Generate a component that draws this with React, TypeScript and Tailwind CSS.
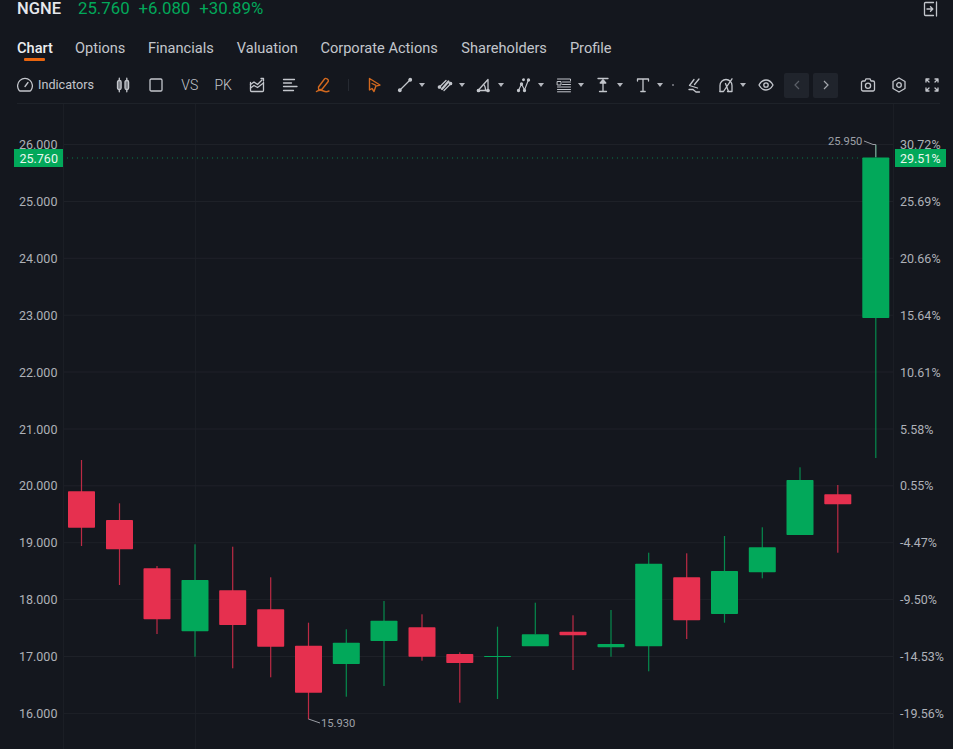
import React from "react";

const G = "#02a85a";
const R = "#e6304f";

type C = [number, number, number, number, number, "g" | "r"];
const candles: C[] = [
  [81.5, 460, 546, 491.3, 527.7, "r"],
  [119.5, 503.3, 585, 520, 549.3, "r"],
  [157, 566, 634, 568.3, 619.3, "r"],
  [195, 544.3, 656.7, 580, 631.3, "g"],
  [232.7, 546.7, 668.3, 590.3, 625, "r"],
  [270.7, 577.3, 677.3, 609.3, 646.7, "r"],
  [308.5, 622.7, 719.3, 645.7, 692.7, "r"],
  [346.3, 629.3, 696.7, 642.7, 664, "g"],
  [384, 601, 686, 620.7, 641, "g"],
  [422, 614.3, 660.7, 627.3, 656.7, "r"],
  [459.8, 652.3, 702.7, 654, 663, "r"],
  [497.5, 626.7, 699, 656, 657, "g"],
  [535.3, 602.7, 634.3, 634.3, 646.3, "g"],
  [573, 615.3, 670, 631.7, 635.3, "r"],
  [611, 610, 656.7, 644, 647.3, "g"],
  [648.7, 552.7, 671.3, 563.7, 646.3, "g"],
  [686.7, 553.3, 639, 577.3, 620.3, "r"],
  [724.5, 536, 622.7, 571, 614, "g"],
  [762.3, 527.3, 578.3, 547.3, 572.3, "g"],
  [800, 467.3, 535, 480, 535, "g"],
  [837.8, 485, 552.7, 494.3, 504.3, "r"],
  [875.8, 145, 458, 157.5, 318, "g"],
];

const rows: [number, string, string][] = [
  [144.5, "26.000", "30.72%"],
  [201.5, "25.000", "25.69%"],
  [258.3, "24.000", "20.66%"],
  [315.2, "23.000", "15.64%"],
  [372, "22.000", "10.61%"],
  [429, "21.000", "5.58%"],
  [485.8, "20.000", "0.55%"],
  [542.7, "19.000", "-4.47%"],
  [599.6, "18.000", "-9.50%"],
  [656.5, "17.000", "-14.53%"],
  [713.4, "16.000", "-19.56%"],
];

function Ico({ children, c = "#c3c6cc", w = 16 }: { children: React.ReactNode; c?: string; w?: number }) {
  return (
    <svg width={w} height={16} viewBox={`0 0 ${w} 16`} fill="none" stroke={c} strokeWidth={1.3} strokeLinecap="round" strokeLinejoin="round" className="shrink-0">
      {children}
    </svg>
  );
}

function Caret() {
  return (
    <svg width={6} height={4} viewBox="0 0 6 4" className="shrink-0">
      <path d="M0 0H6L3 4Z" fill="#b4b7bd" />
    </svg>
  );
}

function Tool({ children, className }: { children: React.ReactNode; className: string }) {
  return (
    <div className={`flex items-center shrink-0 ${className}`}>
      {children}
      <div className="ml-[6px]">
        <Caret />
      </div>
    </div>
  );
}

function Cell({ children }: { children: React.ReactNode }) {
  return <div className="w-[33.4px] shrink-0 flex items-center justify-center">{children}</div>;
}

export default function App() {
  return (
    <div className="w-[953px] h-[749px] overflow-hidden bg-[#14171e] flex flex-col font-[Roboto,sans-serif] text-[#c3c6cc]">
      <div className="h-[17px] flex items-center pl-[17px] pr-[14px] shrink-0 text-[16.8px] leading-[17px]">
        <span className="text-[16.5px] font-medium text-[#e6e8ec]">NGNE</span>
        <span className="ml-[17px] text-[#02a85a]">25.760</span>
        <span className="ml-[9px] text-[#02a85a]">+6.080</span>
        <span className="ml-[9px] text-[#02a85a]">+30.89%</span>
        <div className="ml-auto">
          <Ico w={16}>
            <path d="M10.500 1.500H2.500a1 1 0 0 0-1 1v11a1 1 0 0 0 1 1h8M13.500 1v14" />
            <path d="M4 8h5.500M7.500 5.800 9.800 8 7.500 10.200" strokeWidth={1.4} />
          </Ico>
        </div>
      </div>

      <div className="h-[44px] pt-[22px] flex items-start pl-[17px] text-[14.6px] leading-[18px] shrink-0">
        <div className="relative font-medium text-[#eceef1]">
          Chart
          <div className="absolute left-[7px] top-[19px] w-[21px] h-[3px] rounded-[1px] bg-[#e8650f]" />
        </div>
        <span className="ml-[22px]">Options</span>
        <span className="ml-[22.500px]">Financials</span>
        <span className="ml-[23px]">Valuation</span>
        <span className="ml-[22.500px]">Corporate Actions</span>
        <span className="ml-[23.500px]">Shareholders</span>
        <span className="ml-[23px]">Profile</span>
      </div>

      <div className="h-[43px] ml-[17px] mr-[13px] flex items-center border-b border-[#1e2229] shrink-0">
        <div className="flex items-center h-[42px] w-full pt-[6px]">
          <Ico>
            <path d="M3.300 14h9.400a1.600 1.600 0 0 0 1.200-.7A7.400 7.400 0 1 0 2.100 13.300 1.600 1.600 0 0 0 3.300 14Z" />
            <path d="M8 9.500 11 5.500" />
          </Ico>
          <span className="ml-[5px] w-[55px] text-[12.6px] leading-none shrink-0">Indicators</span>
          <div className="flex items-center ml-[13.300px]">
            <Cell>
              <Ico>
                <rect x="2.500" y="3.500" width="3.600" height="9" rx="1.500" fill="#7d8087" />
                <rect x="10" y="3.500" width="3.600" height="9" rx="1.500" fill="#7d8087" />
                <path d="M4.300 1.200v2.300M4.300 12.500v2.300M11.800 1.200v2.300M11.800 12.500v2.300" />
              </Ico>
            </Cell>
            <Cell>
              <Ico>
                <rect x="2" y="2" width="12" height="12" rx="1.200" />
              </Ico>
            </Cell>
            <Cell>
              <span className="text-[14px] leading-none font-light">VS</span>
            </Cell>
            <Cell>
              <span className="text-[14px] leading-none font-light">PK</span>
            </Cell>
            <Cell>
              <Ico>
                <path d="M1.500 5.500v8a1 1 0 0 0 1 1h11a1 1 0 0 0 1-1v-8" />
                <path d="M1.500 7.500 5 5l3.500 2.500L13 3" />
                <path d="M1.500 11 5 8.500l3.500 2L14.500 6" />
                <path d="M12 1.500h2.500V4" />
              </Ico>
            </Cell>
            <Cell>
              <Ico>
                <path d="M1.500 2.500h11M1.500 6h8M1.500 9.500h13.500M1.500 13.500h10" strokeWidth={1.3} />
              </Ico>
            </Cell>
            <Cell>
              <Ico c="#d2691f">
                <path d="m3.500 10 6-8a1.600 1.600 0 0 1 2.300-.3l.9.7a1.600 1.600 0 0 1 .3 2.300l-6 7.600-3.300.6Z" strokeWidth={1.4} />
                <path d="M1.500 14.500c3-2 5-1.500 7-.5s3.500 1 5.500 0" strokeWidth={1.4} />
              </Ico>
            </Cell>
          </div>
          <div className="ml-[8px] w-px h-[12px] bg-[#262a32] shrink-0" />
          <div className="ml-[15px] w-[20px] flex justify-center shrink-0">
            <Ico c="#d2691f">
              <path d="M3.500 1.500 14 8l-4.200 1.200L8 14.500l-2-3L3.500 13Z" strokeWidth={1.4} />
              <path d="M6 6.500 9.500 8.200" />
            </Ico>
          </div>
          <Tool className="ml-[13px] w-[39.7px]">
            <Ico>
              <path d="M3.500 12.500 12.500 3.500" />
              <circle cx="2.800" cy="13.200" r="1.300" fill="#c3c6cc" />
              <circle cx="13.200" cy="2.800" r="1.300" fill="#c3c6cc" />
            </Ico>
          </Tool>
          <Tool className="w-[39.7px]">
            <Ico>
              <path d="M2 10.500 9 3.500M7 13.500 14 6.500" />
              <path d="M5 12 11.500 4.500" strokeWidth={2.2} />
              <circle cx="2.500" cy="10" r="1.200" fill="#c3c6cc" />
              <circle cx="13.500" cy="6.500" r="1.200" fill="#c3c6cc" />
            </Ico>
          </Tool>
          <Tool className="w-[39.7px]">
            <Ico>
              <path d="M2 13.500 12 2.500v11H2Z" />
              <path d="M7.500 7.500c1.500 1 2 3.500 2 6" />
              <circle cx="2.500" cy="13.500" r="1.200" fill="#c3c6cc" />
              <circle cx="12" cy="13.500" r="1.200" fill="#c3c6cc" />
            </Ico>
          </Tool>
          <Tool className="w-[39.7px]">
            <Ico>
              <path d="M2.500 13.500 5.500 7l3 6L12 4" strokeWidth={1.1} />
              <circle cx="2.500" cy="13.500" r="1" fill="#c3c6cc" />
              <circle cx="5.500" cy="7" r="1" fill="#c3c6cc" />
              <circle cx="8.500" cy="13.500" r="1" fill="#c3c6cc" />
              <circle cx="12.500" cy="3" r="1" fill="#c3c6cc" />
              <circle cx="7.500" cy="2.800" r="0.800" fill="#c3c6cc" />
            </Ico>
          </Tool>
          <Tool className="w-[39.7px]">
            <Ico>
              <path d="M1.500 2h13v1.500M6.500 5h8M6.500 7.500h8M1.500 10h13M1.500 12.500h13M1.500 14.800h13" strokeWidth={1} />
              <rect x="1.500" y="4.500" width="3.500" height="3.500" strokeWidth={1} />
            </Ico>
          </Tool>
          <Tool className="w-[39.7px]">
            <Ico>
              <path d="M4.500 14.500h7M8 6v8.500M3 1.500h10" />
              <path d="M5.200 6 8 2.800 10.800 6Z" fill="#c3c6cc" />
            </Ico>
          </Tool>
          <Tool className="w-[37px]">
            <Ico>
              <path d="M2.500 4V2h11v2M8 2v12.500M5.800 14.500h4.400" />
            </Ico>
          </Tool>
          <div className="w-[2px] h-[2px] rounded-full bg-[#7f828a] shrink-0" />
          <div className="ml-[12px] shrink-0">
            <Ico>
              <path d="M13 2 8.500 7.500M8 2.500 3.500 8.500l8 2.500" />
              <path d="M3 12.500h4l3 2.500h3.500" />
            </Ico>
          </div>
          <Tool className="ml-[15.500px] w-[40.500px]">
            <Ico>
              <path d="M2 14.500V8.500a6 6 0 0 1 12 0v6H9.500" />
              <path d="M14 1.800 5.500 14.500H2M7.500 6.500l3 8" />
            </Ico>
          </Tool>
          <div className="shrink-0">
            <Ico>
              <path d="M1 8c1.800-3.300 4.200-5 7-5s5.200 1.700 7 5c-1.800 3.300-4.200 5-7 5S2.800 11.300 1 8Z" />
              <circle cx="8" cy="8" r="2.200" />
            </Ico>
          </div>
          <div className="ml-[10px] w-[25px] h-[25px] bg-[#20242c] rounded-[2px] flex items-center justify-center shrink-0">
            <svg width={6} height={10} viewBox="0 0 6 10" fill="none" stroke="#5c6068" strokeWidth={1.2}>
              <path d="M5 1 1 5l4 4" />
            </svg>
          </div>
          <div className="ml-[4px] w-[25px] h-[25px] bg-[#20242c] rounded-[2px] flex items-center justify-center shrink-0">
            <svg width={6} height={10} viewBox="0 0 6 10" fill="none" stroke="#a4a7ad" strokeWidth={1.2}>
              <path d="M1 1l4 4-4 4" />
            </svg>
          </div>
          <div className="ml-auto flex items-center">
            <Ico>
              <path d="M1.500 5.500a1.500 1.500 0 0 1 1.500-1.500h2L6 1.800h4L11 4h2a1.500 1.500 0 0 1 1.500 1.500v7A1.500 1.500 0 0 1 13 14H3a1.500 1.500 0 0 1-1.500-1.500Z" />
              <circle cx="8" cy="8.800" r="2.600" />
            </Ico>
            <div className="ml-[15px]">
              <Ico>
                <path d="M8 1 14 4.500v7L8 15 2 11.500v-7Z" />
                <circle cx="8" cy="8" r="2.300" />
              </Ico>
            </div>
            <div className="ml-[17.500px]">
              <Ico>
                <path d="M2 5V2h3M2 2l3 3M11 2h3v3M14 2l-3 3M2 11v3h3M2 14l3-3M14 11v3h-3M14 14l-3-3" strokeWidth={1.3} />
              </Ico>
            </div>
          </div>
        </div>
      </div>

      <svg width={953} height={645} viewBox="0 104 953 645" className="block shrink-0" fontFamily="Roboto, sans-serif">
        <path d="M63.500 104V749M195.500 104V749M893.500 104V749" stroke="#1b1e25" strokeWidth={1} />
        {rows.map(([y]) => (
          <path key={y} d={`M64 ${y}H893`} stroke="#1e2128" strokeWidth={1} />
        ))}
        {rows.map(([y, l, r]) => (
          <g key={l} fontSize={12.5} fill="#aeb1b8" dominantBaseline="central">
            <text x={19} y={y}>{l}</text>
            <text x={900} y={y}>{r}</text>
          </g>
        ))}
        <path d="M67 158H860" stroke="#02a85a" strokeOpacity={0.7} strokeWidth={1} strokeDasharray="1 4" />
        {candles.map(([x, wt, wb, bt, bb, k]) => {
          const col = k === "g" ? G : R;
          return (
            <g key={x}>
              <rect x={x - 0.6} y={wt} width={1.2} height={wb - wt} fill={col} opacity={0.8} />
              <rect x={x - 13.5} y={bt} width={27} height={bb - bt} rx={0.8} fill={col} />
            </g>
          );
        })}
        <path d="M864 141 873 144.500H875.800V157" stroke="#9a9da4" strokeWidth={1} fill="none" />
        <path d="M308.500 719 320 723" stroke="#9a9da4" strokeWidth={1} fill="none" />
        <text x={828} y={141} fontSize={11.2} fill="#9ea1a8" dominantBaseline="central">25.950</text>
        <text x={321} y={723} fontSize={11.2} fill="#9ea1a8" dominantBaseline="central">15.930</text>
        <rect x={14} y={149} width={49} height={18} fill={G} />
        <text x={19.5} y={158} fontSize={12.5} fill="#e9f7ef" dominantBaseline="central">25.760</text>
        <rect x={895} y={149} width={51} height={18} fill={G} />
        <text x={900} y={158} fontSize={12.5} fill="#e9f7ef" dominantBaseline="central">29.51%</text>
      </svg>
    </div>
  );
}
